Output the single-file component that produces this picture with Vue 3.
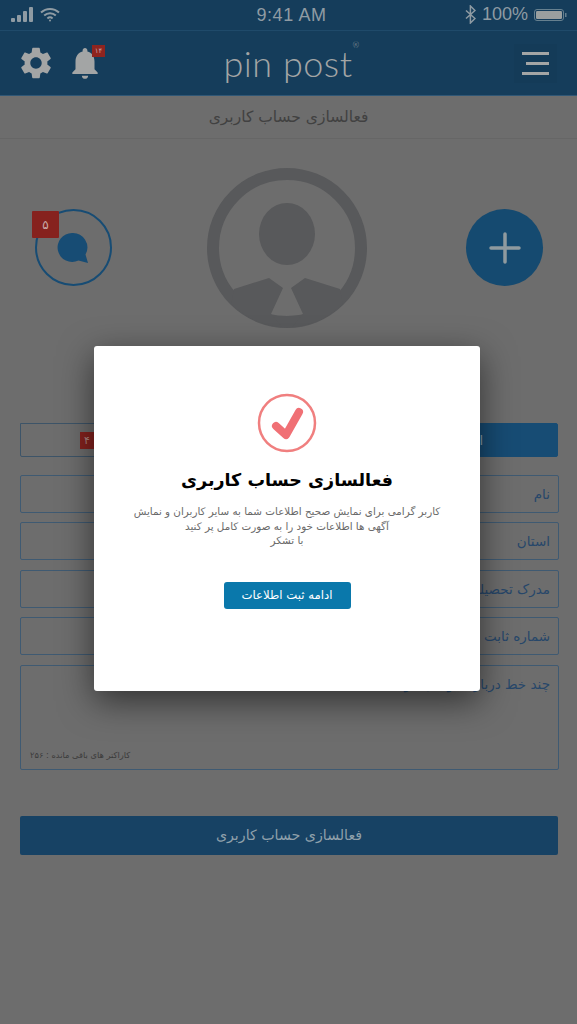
<script setup>
const fields = [
  { label: 'نام' },
  { label: 'استان' },
  { label: 'مدرک تحصیلی' },
  { label: 'شماره ثابت' },
]
</script>

<template>
  <div class="screen" dir="rtl">
    <header class="top" dir="ltr">
      <div class="status">
        <div class="status-left">
          <svg width="23" height="15" viewBox="0 0 23 15" fill="#8f9ba3">
            <rect x="0" y="11" width="4" height="4" rx="1" />
            <rect x="6" y="8" width="4" height="7" rx="1" />
            <rect x="12" y="4" width="4" height="11" rx="1" />
            <rect x="18" y="0" width="4" height="15" rx="1" />
          </svg>
          <svg width="20" height="15" viewBox="0 0 20 15" fill="none" stroke="#8f9ba3" stroke-width="2">
            <path d="M1 5.5a13 13 0 0 1 18 0" />
            <path d="M4.2 8.6a8.5 8.5 0 0 1 11.6 0" />
            <path d="M7.4 11.4a4 4 0 0 1 5.2 0" />
            <circle cx="10" cy="13.6" r="1" fill="#8f9ba3" stroke="none" />
          </svg>
        </div>
        <span class="time">9:41 AM</span>
        <div class="status-right">
          <svg width="11" height="19" viewBox="0 0 11 19" fill="none" stroke="#8f9ba3" stroke-width="1.5">
            <path d="M1 5.5l9 8-4.6 4.5V1L10 5.5l-9 8" />
          </svg>
          <span class="pct">100%</span>
          <svg width="33" height="12" viewBox="0 0 33 12">
            <rect x=".5" y=".5" width="29" height="11" rx="2.5" fill="none" stroke="#66808f" />
            <rect x="2" y="2" width="26" height="8" rx="1.2" fill="#9a9f9f" />
            <rect x="31" y="4" width="1.5" height="4" fill="#66808f" />
          </svg>
        </div>
      </div>
      <div class="nav">
        <div class="nav-icons">
          <svg class="gear" width="38" height="38" viewBox="0 0 24 24" fill="#a3a5a5">
            <path d="M19.14 12.94c.04-.3.06-.61.06-.94 0-.32-.02-.64-.07-.94l2.03-1.58c.18-.14.23-.41.12-.61l-1.92-3.32c-.12-.22-.37-.29-.59-.22l-2.39.96c-.5-.38-1.03-.7-1.62-.94l-.36-2.54c-.04-.24-.24-.41-.48-.41h-3.84c-.24 0-.43.17-.47.41l-.36 2.54c-.59.24-1.13.57-1.62.94l-2.39-.96c-.22-.08-.47 0-.59.22L2.74 8.87c-.12.21-.08.47.12.61l2.03 1.58c-.05.3-.09.63-.09.94s.02.64.07.94l-2.03 1.58c-.18.14-.23.41-.12.61l1.92 3.32c.12.22.37.29.59.22l2.39-.96c.5.38 1.03.7 1.62.94l.36 2.54c.05.24.24.41.48.41h3.84c.24 0 .44-.17.47-.41l.36-2.54c.59-.24 1.13-.56 1.62-.94l2.39.96c.22.08.47 0 .59-.22l1.92-3.32c.12-.22.07-.47-.12-.61l-2.01-1.58zM12 15.6c-1.98 0-3.6-1.62-3.6-3.6s1.62-3.6 3.6-3.6 3.6 1.62 3.6 3.6-1.62 3.6-3.6 3.6z" />
          </svg>
          <div class="bell">
            <svg width="38" height="38" viewBox="0 0 24 24" fill="#a3a5a5">
              <path d="M12 22c1.1 0 2-.9 2-2h-4c0 1.100.89 2 2 2zm6-6v-5c0-3.070-1.640-5.640-4.500-6.320V4c0-.83-.67-1.500-1.500-1.500s-1.500.67-1.500 1.500v.68C7.630 5.360 6 7.920 6 11v5l-2 2v1h16v-1l-2-2z" />
            </svg>
            <span class="bell-badge">۱۴</span>
          </div>
        </div>
        <div class="logo">pin post<sup>®</sup></div>
        <div class="menu">
          <span></span><span class="short"></span><span></span>
        </div>
      </div>
    </header>

    <div class="page-title">فعالسازی حساب کاربری</div>

    <section class="profile" dir="ltr">
      <div class="chat">
        <span class="chat-badge">۵</span>
        <svg width="32" height="32" viewBox="0 0 32 32" fill="#174c74">
          <path d="M15 1a14.500 14.500 0 1 0 6.500 27.500L31 31l-2.500-8.500A14.500 14.500 0 0 0 15 1z" />
        </svg>
      </div>
      <svg class="avatar" width="160" height="160" viewBox="0 0 160 160">
        <defs>
          <clipPath id="disc"><circle cx="80" cy="80" r="79" /></clipPath>
        </defs>
        <circle cx="80" cy="80" r="74" fill="none" stroke="#58595b" stroke-width="12" />
        <ellipse cx="80" cy="66" rx="28" ry="31" fill="#58595b" />
        <g clip-path="url(#disc)" fill="#58595b">
          <path d="M27 121l35-11 14 10-12 26 12 14H20z" />
          <path d="M133 121l-35-11-14 10 12 26-12 14h56z" />
        </g>
      </svg>
      <div class="add">
        <svg width="32" height="32" viewBox="0 0 32 32" stroke="#8f9a9f" stroke-width="3.500" stroke-linecap="round">
          <path d="M16 2v28M2 16h28" />
        </svg>
      </div>
    </section>

    <div class="tabs">
      <div class="tab active">اطلاعات کاربری</div>
      <div class="tab">
        <span class="tab-label">پیام ها</span>
        <span class="tab-badge">۴</span>
      </div>
    </div>

    <div class="fields">
      <div v-for="f in fields" :key="f.label" class="field">{{ f.label }}</div>
      <div class="field area">
        <span>چند خط درباره خودتان بنویسید</span>
        <small>کاراکتر های باقی مانده : ۲۵۶</small>
      </div>
    </div>

    <div class="submit">فعالسازی حساب کاربری</div>

    <div class="modal">
      <svg width="60" height="60" viewBox="0 0 60 60" fill="none">
        <circle cx="30" cy="30" r="28" stroke="#f07f7f" stroke-width="2.500" />
        <path d="M19 33l10 9 13-23" stroke="#f07075" stroke-width="8" stroke-linecap="round" stroke-linejoin="round" />
      </svg>
      <h1>فعالسازی حساب کاربری</h1>
      <p>
        کاربر گرامی برای نمایش صحیح اطلاعات شما به سایر کاربران و نمایش<br />
        آگهی ها اطلاعات خود را به صورت کامل پر کنید<br />
        با تشکر
      </p>
      <button type="button">ادامه ثبت اطلاعات</button>
    </div>
  </div>
</template>

<style scoped>
.screen {
  position: relative;
  width: 577px;
  height: 1024px;
  overflow: hidden;
  background: #6d6d6d;
  font-family: "DejaVu Sans", "Noto Sans", sans-serif;
}
.top {
  height: 96px;
  background: #153d5b;
  border-bottom: 1px solid #2f5776;
  box-sizing: border-box;
}
.status {
  height: 31px;
  display: grid;
  grid-template-columns: 1fr auto 1fr;
  align-items: center;
  padding: 0 10px 0 11px;
  border-bottom: 1px solid #1f4a6a;
  box-sizing: border-box;
  font-family: "Liberation Sans", sans-serif;
  color: #8f9ba3;
}
.status-left, .status-right {
  display: flex;
  align-items: center;
}
.status-left { gap: 6px; margin-top: -1px; }
.status-right { gap: 6px; margin-top: -1px; justify-content: flex-end; }
.time {
  font-size: 18px;
  letter-spacing: .6px;
  margin-left: 5px;
}
.pct { font-size: 18px; }
.nav {
  height: 64px;
  display: grid;
  grid-template-columns: 1fr auto 1fr;
  align-items: center;
  padding: 0 19px 0 17px;
}
.nav-icons {
  display: flex;
  align-items: center;
  gap: 11px;
}
.bell {
  position: relative;
  display: flex;
}
.bell-badge {
  position: absolute;
  top: 1px;
  right: -1px;
  width: 13px;
  height: 12px;
  background: #8e241f;
  color: #c9a0a0;
  font-size: 7px;
  line-height: 12px;
  text-align: center;
}
.logo {
  font-family: "Lato", sans-serif;
  font-weight: 300;
  font-size: 36px;
  line-height: 40px;
  letter-spacing: .5px;
  color: #a3a5a5;
  position: relative;
  margin-left: 1px;
}
.logo sup {
  position: absolute;
  top: -4px;
  font-size: 8px;
  line-height: 12px;
}
.menu {
  width: 27px;
  display: flex;
  flex-direction: column;
  align-items: flex-end;
  gap: 7px;
  margin-right: 9px;
  justify-self: end;
  box-shadow: 0 0 0 8px #143b58;
  background: #143b58;
}
.menu span {
  width: 27px;
  height: 3px;
  background: #a3a5a5;
}
.menu .short { width: 23px; }
.page-title {
  height: 43px;
  display: flex;
  align-items: center;
  justify-content: center;
  font-size: 15.500px;
  color: #414141;
  border-bottom: 1px solid #666;
  box-sizing: border-box;
}
.profile {
  height: 285px;
  padding: 29px 34px 0 35px;
  box-sizing: border-box;
  display: flex;
  justify-content: space-between;
  align-items: flex-start;
}
.avatar { margin-right: 4px; }
.chat {
  position: relative;
  width: 77px;
  height: 77px;
  margin-top: 41px;
  border: 2px solid #174c74;
  border-radius: 50%;
  box-sizing: border-box;
  display: flex;
  align-items: center;
  justify-content: center;
}
.chat svg { margin-top: 1px; margin-right: 1px; }
.chat-badge {
  position: absolute;
  top: 0;
  left: -5px;
  width: 27px;
  height: 27px;
  background: #86221e;
  color: #c9a9a5;
  font-size: 12px;
  display: flex;
  align-items: center;
  justify-content: center;
  border-radius: 1px;
}
.add {
  width: 77px;
  height: 77px;
  margin-top: 41px;
  border-radius: 50%;
  background: #154a70;
  display: flex;
  align-items: center;
  justify-content: center;
}
.tabs {
  display: flex;
  margin: -1px 19px 0 20px;
  height: 34px;
  font-size: 13px;
}
.tab {
  flex: 1;
  display: flex;
  align-items: center;
  justify-content: flex-end;
  gap: 8px;
  padding-left: 59px;
  box-sizing: border-box;
  border: 1px solid #3d5468;
  color: #3d5468;
  border-radius: 0 0 0 2px;
}
.tab.active {
  justify-content: flex-start;
  padding-left: 0;
  padding-right: 74px;
  background: #174c74;
  border-color: #174c74;
  color: #8fa2ad;
  border-radius: 0 2px 2px 0;
}
.tab-badge {
  width: 14px;
  height: 17px;
  background: #86221e;
  color: #b08a85;
  font-size: 11px;
  display: flex;
  align-items: center;
  justify-content: center;
}
.fields {
  display: flex;
  flex-direction: column;
  gap: 9.400px;
  margin: 18px 18px 0 20px;
}
.field {
  height: 38px;
  box-sizing: border-box;
  border: 1px solid #3f5a72;
  border-radius: 2px;
  padding: 0 8px;
  display: flex;
  align-items: center;
  font-size: 13.500px;
  color: #27476a;
}
.area {
  height: 105px;
  padding-top: 10px;
  padding-bottom: 9px;
  flex-direction: column;
  align-items: flex-start;
  justify-content: space-between;
}
.area small {
  font-size: 8.300px;
  color: #3c3c3c;
  align-self: flex-end;
  margin-left: 1px;
}
.submit {
  height: 39px;
  margin: 46px 19px 0 20px;
  background: #174264;
  border-radius: 2px;
  display: flex;
  align-items: center;
  justify-content: center;
  font-size: 14.200px;
  color: #8fa0ab;
}
.modal {
  position: absolute;
  left: 94px;
  top: 346px;
  width: 386px;
  height: 345px;
  box-sizing: border-box;
  padding-top: 47px;
  background: #fff;
  border-radius: 3px;
  box-shadow: 0 10px 34px rgba(0, 0, 0, .55);
  display: flex;
  flex-direction: column;
  align-items: center;
}
.modal h1 {
  margin: 14px 0 0;
  font-size: 17.500px;
  line-height: 26px;
  font-weight: 700;
  color: #000;
}
.modal p {
  margin: 11px 0 0;
  font-size: 10.350px;
  line-height: 14.500px;
  color: #6a6a6a;
  text-align: center;
  white-space: nowrap;
}
.modal button {
  margin-top: 34px;
  width: 127px;
  height: 27px;
  border: 0;
  border-radius: 3px;
  background: #0a78ab;
  color: #fff;
  font-family: inherit;
  font-size: 11.700px;
  padding: 0;
}
</style>
